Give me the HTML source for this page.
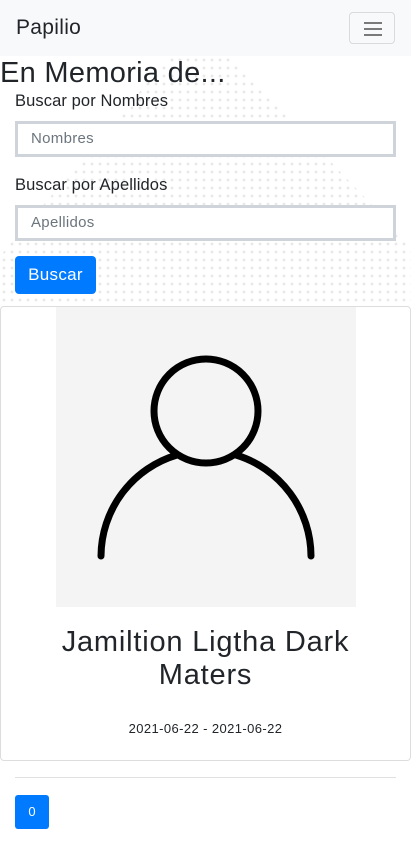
<!DOCTYPE html>
<html><head><meta charset="utf-8"><style>
*{box-sizing:border-box;margin:0;padding:0}
body{width:411px;height:845px;background:#fff;font-family:"Liberation Sans",sans-serif;color:#212529;position:relative;overflow:hidden}
.dots{position:absolute;left:0;top:56px;width:411px;height:250px;background-image:radial-gradient(circle,#e8e8e8 1.2px,transparent 1.6px);background-size:8px 8px;clip-path:polygon(170px 0,230px 0,411px 190px,411px 250px,0 250px,0 200px)}
nav{position:absolute;top:0;left:0;width:411px;height:56px;background:#f8f9fa}
.brand{position:absolute;left:16px;top:16px;font-size:21px;letter-spacing:.3px}
.tog{position:absolute;left:349px;top:12px;width:46px;height:32px;border:1px solid rgba(0,0,0,.12);border-radius:4px}
.tog i{position:absolute;left:14px;width:18px;height:2px;background:#7a7a7a}
h1{position:absolute;left:0;top:56px;font-size:29px;font-weight:normal;line-height:34px;letter-spacing:.3px}
.lbl{position:absolute;left:15px;font-size:16.5px;letter-spacing:.1px}
.inp{position:absolute;left:15px;width:381px;height:36px;border:3px solid #ced4da;background:#fff;padding-left:13px;line-height:30px;font-size:15px;color:#6c757d;letter-spacing:.3px}
.btn{position:absolute;left:15px;top:256px;width:81px;height:38px;background:#007bff;border-radius:4px;color:#fff;font-size:17px;text-align:center;line-height:38px;letter-spacing:.3px}
.card{position:absolute;left:0;top:306px;width:411px;height:455px;border:1px solid #ddd;border-radius:4px;background:#fff}
.img{position:absolute;left:56px;top:307px;width:300px;height:300px;background:#f4f4f4}
.name{position:absolute;left:0;width:411px;top:626px;text-align:center;font-size:29px;line-height:33px;letter-spacing:.8px}
.date{position:absolute;left:0;width:411px;top:721px;text-align:center;font-size:13px;letter-spacing:.4px}
hr{position:absolute;left:15px;top:777px;width:381px;border:0;border-top:1px solid #e0e0e0}
.zero{position:absolute;left:15px;top:795px;width:34px;height:34px;background:#007bff;border-radius:3px;color:#fff;font-size:13px;text-align:center;line-height:34px}
</style></head><body>
<div class="dots"></div>
<nav><div class="brand">Papilio</div><div class="tog"><i style="top:9px"></i><i style="top:15px"></i><i style="top:21px"></i></div></nav>
<h1>En Memoria de...</h1>
<div class="lbl" style="top:92px">Buscar por Nombres</div>
<div class="inp" style="top:121px">Nombres</div>
<div class="lbl" style="top:176px">Buscar por Apellidos</div>
<div class="inp" style="top:205px">Apellidos</div>
<div class="btn">Buscar</div>
<div class="card"></div>
<div class="img"><svg width="300" height="300" viewBox="0 0 300 300" fill="none" stroke="#000" stroke-width="7" stroke-linecap="round">
<circle cx="150" cy="104" r="52"/>
<path d="M45 249 A106 106 0 0 1 121 148"/>
<path d="M180 148 A106 106 0 0 1 255 249"/>
</svg></div>
<div class="name">Jamiltion Ligtha Dark<br>Maters</div>
<div class="date">2021-06-22 - 2021-06-22</div>
<hr>
<div class="zero">0</div>
</body></html>
